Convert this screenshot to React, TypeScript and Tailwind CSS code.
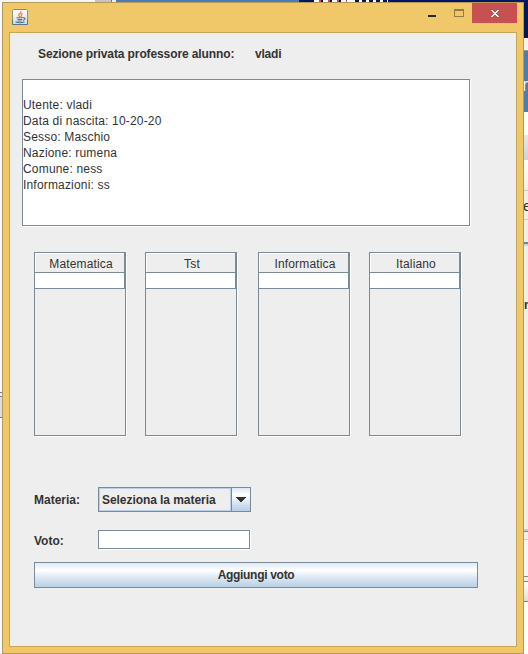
import React from "react";

function JavaIcon() {
  return (
    <svg width="16" height="16" viewBox="0 0 16 16" className="block">
      <defs>
        <linearGradient id="cupTile" x1="0" y1="0" x2="0" y2="1">
          <stop offset="0" stopColor="#ffffff" />
          <stop offset="1" stopColor="#d5dadd" />
        </linearGradient>
      </defs>
      <rect x="0.5" y="0.5" width="15" height="15" rx="1" fill="url(#cupTile)" stroke="#8c8d85" />
      <path d="M.5 11v4.500h15V11" fill="none" stroke="#53748a" />
      <path d="M9 2.200c.7 2-3.300 2.600-2.200 4.400L8 8M10.700 4.300C8.500 5.200 9 6 9.700 6.700L8.700 8" fill="none" stroke="#e9812f" strokeWidth="1.200" />
      <path d="M4.500 8.700h6.800M5.300 10.500h5M5.700 12h4M11.300 8.800c2.600-.4 2.200 2-.3 2.400M3.500 12.800c2 1.200 7 1.200 9 0" fill="none" stroke="#547791" strokeWidth="1.100" />
    </svg>
  );
}

function TitleBar() {
  return (
    <div className="flex h-[30px] shrink-0 items-start">
      <div className="ml-[9px] mt-[6px]"><JavaIcon /></div>
      <svg width="89" height="20" viewBox="0 0 89 20" shapeRendering="crispEdges" className="ml-auto mr-[6px] block">
        <path d="M0 12h8v2H0z" fill="#2b2b2b" />
        <path d="M26 6h10v8H26zM27 8v5h8V8z" fillRule="evenodd" fill="#947b48" />
        <path d="M44 0h45v20H44z" fill="#c75050" />
        <path d="M63 7h2v1h1v1h2V8h1V7h2v1h-1v1h-1v1h-1v1h1v1h1v1h1v1h-2v-1h-1v-1h-2v1h-1v1h-2v-1h1v-1h1v-1h1v-1h-1V9h-1V8h-1z" fill="#fff" />
      </svg>
    </div>
  );
}

function GradeTable({ name, left }: { name: string; left: string }) {
  return (
    <div className={`h-[184px] w-[92px] shrink-0 border border-[#7a8a99] shadow-[1px_1px_0_#fff] ${left}`}>
      <div className="flex h-[20px] items-center justify-center border-b border-r border-[#7a8a99] pl-[3px] shadow-[inset_1px_1px_0_#fff]">
        <span className="relative top-px text-[12px] leading-[16px] tracking-[0.15px]">{name}</span>
      </div>
      <div className="h-[16px] border-b border-r border-[#7a8a99] bg-white" />
    </div>
  );
}

const details = [
  "Utente: vladi",
  "Data di nascita: 10-20-20",
  "Sesso: Maschio",
  "Nazione: rumena",
  "Comune: ness",
  "Informazioni: ss",
];

function Desktop() {
  return (
    <div className="flex h-full flex-col">
      <div className="flex h-[2px]">
        <div className="w-[95px] bg-[#f4f5f6]" />
        <div className="w-[16px] bg-[#c5c5c5]" />
        <div className="w-[5px] border-l border-[#777] bg-[#eee]" />
        <div className="w-[183px] bg-[#4a7db5]" />
        <div className="w-[15px] bg-[#001663]" />
        <div className="w-[33px] bg-[repeating-linear-gradient(90deg,#fff_0_5px,#c94b63_5px_7px,#001663_7px_9px)]" />
        <div className="w-[5px] bg-white" />
        <div className="w-[36px] bg-[repeating-linear-gradient(90deg,#fff_0_3px,#001663_3px_7px)]" />
        <div className="flex-1 bg-[#001663]" />
      </div>
      <div className="flex flex-1 justify-between">
        <div className="w-[2px] bg-[#f7f9fb]">
          <div className="mt-[390px] h-[5px] border-y border-[#7a7f84] bg-[#eee]" />
          <div className="h-[21px] border-b border-[#7a7f84] bg-[#ddd]" />
        </div>
        <div className="flex w-[4px] flex-col overflow-hidden bg-[#eee] text-[12px] leading-[16px]">
          <div className="h-[36px] shrink-0 bg-[#001663]" />
          <div className="h-[13px] shrink-0 border-b border-[#999] bg-[#f3f3f3]" />
          <div className="h-[61px] shrink-0 bg-[#4b7cb4] pt-[24px] indent-[-2px] text-[18px] leading-[20px] text-white">r</div>
          <div className="h-[23px] shrink-0 bg-white" />
          <div className="h-[25px] shrink-0 bg-gradient-to-b from-[#e5e9ed] to-[#c5d3e2]" />
          <div className="h-[31px] shrink-0 border-b border-[#ccc] bg-gradient-to-b from-white to-[#eee]" />
          <div className="h-[29px] shrink-0 border-b border-[#ccc] pt-[7px] indent-[-1px] text-[15px]">e</div>
          <div className="h-[26px] shrink-0 border-b-2 border-[#c4d8ec] shadow-[inset_0_-2px_0_#5f87b7]" />
          <div className="h-[286px] shrink-0 border-b border-[#7a8a99] pt-[51px] font-bold shadow-[inset_0_-2px_0_#b8cfe5]">n</div>
          <div className="h-[8px] shrink-0 border-b border-[#ccc]" />
          <div className="h-[37px] shrink-0 border-b border-[#7a8a99] bg-[#f1f6ff]" />
          <div className="h-[5px] shrink-0 border-b border-[#7a7f84]" />
          <div className="h-[20px] shrink-0 border-b border-[#7a7f84] bg-gradient-to-b from-white to-[#ddd]" />
          <div className="flex-1 bg-white" />
        </div>
      </div>
    </div>
  );
}

export default function App() {
  return (
    <div className="relative h-[654px] w-[528px] overflow-hidden font-['Liberation_Sans',Arial,sans-serif] text-[#333]">
      <Desktop />
      <div className="absolute left-[2px] top-[2px] flex h-[652px] w-[522px] flex-col border border-[#b59a55] bg-[#f0c869]">
        <div className="-mb-px flex h-[30px] shrink-0 flex-col"><TitleBar /></div>
        <div className="mx-[6px] flex h-[615px] shrink-0 flex-col border border-[#c8a550] bg-[#eee]">
          <div className="ml-[28px] mt-[13px] flex h-[16px] text-[12px] font-bold leading-[16px]">
            <span className="w-[217px] tracking-[-0.11px]">Sezione privata professore alunno:</span>
            <span className="tracking-[-0.2px]">vladi</span>
          </div>
          <div className="ml-[12px] mt-[17px] h-[147px] w-[448px] shrink-0 border border-[#7a8a99] bg-white pt-[17px] shadow-[1px_1px_0_#fff]">
            {details.map((line) => (
              <div key={line} className="h-[16px] text-[12px] leading-[16px] tracking-[0.18px]">{line}</div>
            ))}
          </div>
          <div className="ml-[24px] mt-[26px] flex">
            <GradeTable name="Matematica" left="" />
            <GradeTable name="Tst" left="ml-[19px]" />
            <GradeTable name="Informatica" left="ml-[21px]" />
            <GradeTable name="Italiano" left="ml-[19px]" />
          </div>
          <div className="ml-[24px] mt-[51px] flex h-[25px] items-center text-[12px] font-bold leading-[16px]">
            <span className="w-[64px]">Materia:</span>
            <div className="flex h-[25px] w-[153px] border border-[#7a8a99]">
              <div className="flex w-[132px] items-center border border-[#b8cfe5] pl-[2px] tracking-[-0.06px]">Seleziona la materia</div>
              <div className="flex flex-1 items-center justify-center border-l border-[#7a8a99] bg-[linear-gradient(#dde8f3_0%,#fff_30%,#dde8f3_60%,#b8cfe5_100%)]">
                <svg width="10" height="5" viewBox="0 0 10 5" shapeRendering="crispEdges"><path d="M0 0h10v1H9v1H8v1H7v1H6v1H4V4H3V3H2V2H1V1H0z" fill="#333" /></svg>
              </div>
            </div>
          </div>
          <div className="ml-[24px] mt-[18px] flex h-[19px] items-center text-[12px] font-bold leading-[16px]">
            <label htmlFor="vote" className="relative top-px w-[64px]">Voto:</label>
            <input id="vote" className="h-[19px] w-[152px] border border-[#7a8a99] bg-white px-1 shadow-[1px_1px_0_#fff] outline-none" />
          </div>
          <button className="ml-[24px] mt-[13px] h-[26px] w-[444px] border border-[#7a8a99] bg-[linear-gradient(#dde8f3_0%,#fff_30%,#dde8f3_60%,#b8cfe5_100%)] text-[12px] font-bold leading-[16px] tracking-[-0.3px]">Aggiungi voto</button>
        </div>
      </div>
    </div>
  );
}
